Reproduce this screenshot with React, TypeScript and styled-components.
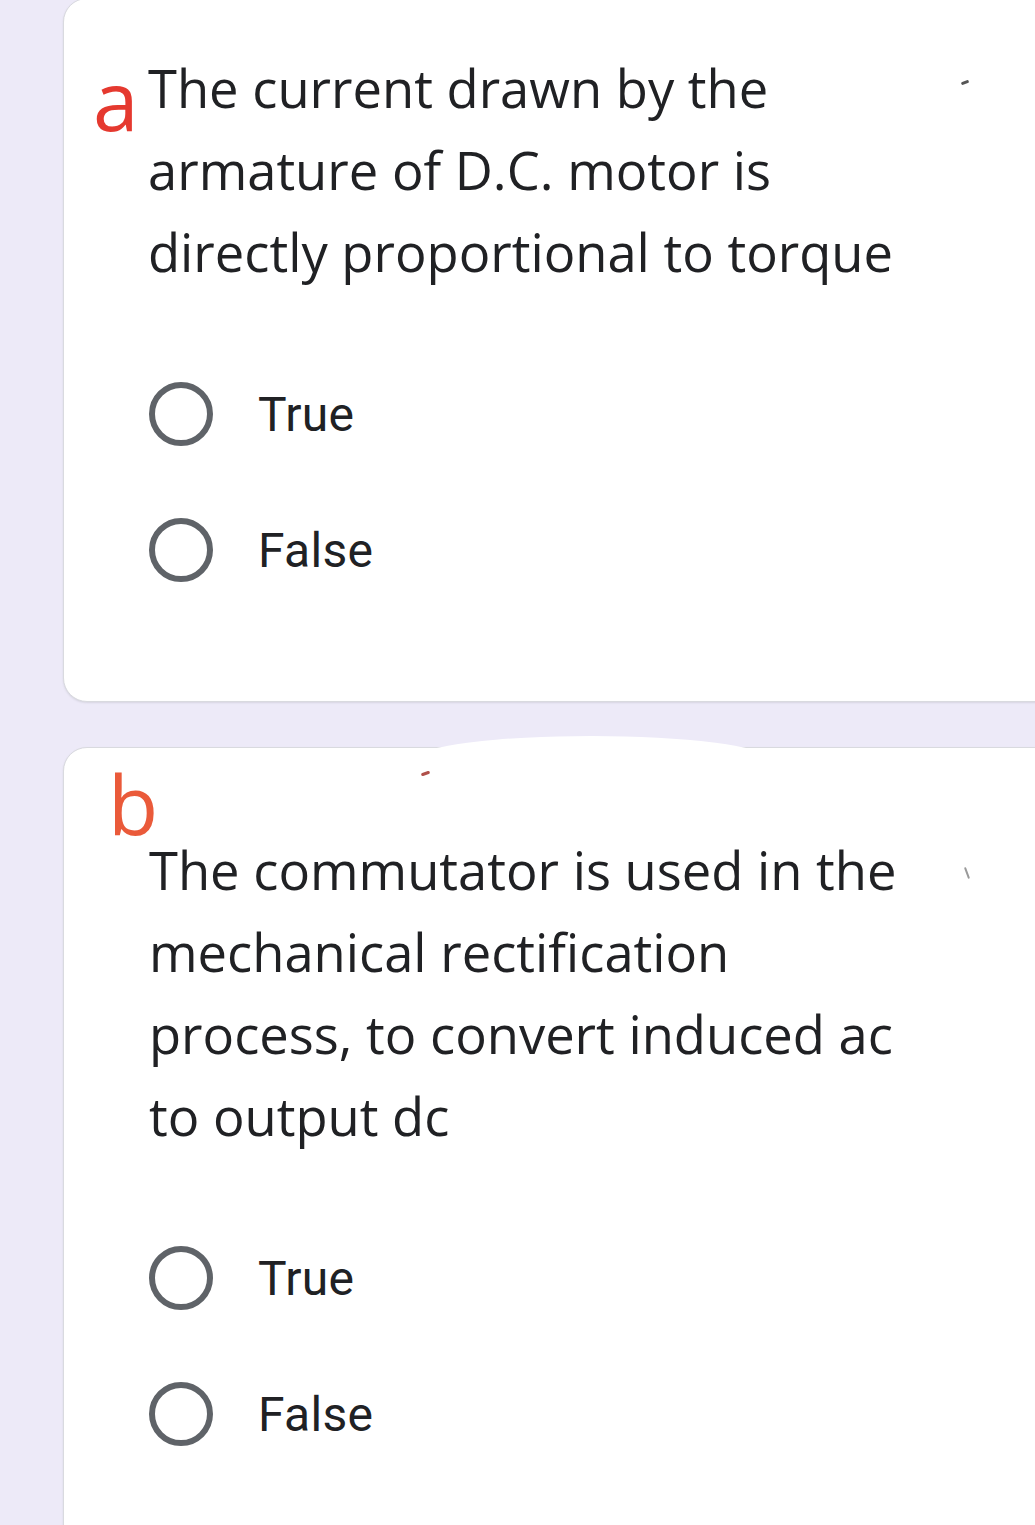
import React from "react";
import styled, { createGlobalStyle } from "styled-components";

const Global = createGlobalStyle`
  html, body { margin: 0; padding: 0; }
  body {
    background: #edeaf8;
    font-family: Roboto, "Noto Sans", Arial, sans-serif;
    overflow: hidden;
  }
`;

const Page = styled.div`
  width: 1035px;
  height: 1525px;
  overflow: hidden;
  display: flex;
  flex-direction: column;
  gap: 45px;
`;

const Card = styled.section<{ $top?: number }>`
  position: relative;
  margin-left: 63px;
  margin-right: -40px;
  margin-top: ${(p) => p.$top ?? 0}px;
  background: #ffffff;
  border: 1px solid #d9dadf;
  border-radius: 24px;
  box-shadow: 0 1px 2px rgba(60, 64, 67, 0.12);
  padding: 0 0 0 29px;
  flex-shrink: 0;
`;

const HeadRow = styled.div`
  display: flex;
  align-items: flex-start;
`;

const Letter = styled.span<{ $color: string; $size: number }>`
  font-family: "Open Sans", Roboto, sans-serif;
  color: ${(p) => p.$color};
  font-size: ${(p) => p.$size}px;
  line-height: 1;
`;

const LetterA = styled(Letter)`
  width: 55px;
  margin-top: 11px;
`;

const LetterB = styled(Letter)`
  display: block;
  margin-left: 15px;
  padding-top: 14px;
  height: 67px;
`;

const Question = styled.div<{ $indent?: number }>`
  color: #202124;
  font-family: "Open Sans", Roboto, sans-serif;
  font-size: 52.5px;
  line-height: 82px;
  margin-left: ${(p) => p.$indent ?? 0}px;
  width: 840px;
`;

const Options = styled.div`
  display: flex;
  flex-direction: column;
  margin-left: 56px;
  margin-top: 53px;
`;

const OptionRow = styled.label`
  display: flex;
  align-items: center;
  height: 136px;
  gap: 45px;
`;

const Radio = styled.span`
  width: 64px;
  height: 64px;
  box-sizing: border-box;
  border-radius: 50%;
  border: 6px solid #5f6368;
  flex-shrink: 0;
`;

const OptionText = styled.span`
  color: #202124;
  font-size: 48px;
  letter-spacing: 0.3px;
`;

const Mark = styled.span<{ $x: number; $y: number; $w: number; $h: number; $c: string; $r?: number }>`
  position: absolute;
  left: ${(p) => p.$x}px;
  top: ${(p) => p.$y}px;
  width: ${(p) => p.$w}px;
  height: ${(p) => p.$h}px;
  background: ${(p) => p.$c};
  border-radius: ${(p) => p.$r ?? 2}px;
  transform: rotate(-20deg);
`;

const Smear = styled.span`
  position: absolute;
  left: 355px;
  top: -12px;
  width: 345px;
  height: 22px;
  background: #ffffff;
  border-radius: 50% 50% 0 0 / 100% 100% 0 0;
`;

const Choices = () => (
  <Options>
    <OptionRow>
      <Radio />
      <OptionText>True</OptionText>
    </OptionRow>
    <OptionRow>
      <Radio />
      <OptionText>False</OptionText>
    </OptionRow>
  </Options>
);

export default function App() {
  return (
    <>
      <Global />
      <Page>
        <Card $top={-2} style={{ paddingTop: 48, paddingBottom: 83 }}>
          <HeadRow>
            <LetterA $color="#e5392f" $size={82}>a</LetterA>
            <Question>
              The current drawn by the
              <br />
              armature of D.C. motor is
              <br />
              directly proportional to torque
            </Question>
          </HeadRow>
          <Choices />
          <Mark $x={897} $y={82} $w={8} $h={3} $c="#555555" />
        </Card>
        <Card style={{ paddingBottom: 200 }}>
          <Smear />
          <LetterB $color="#ea5a3a" $size={82}>b</LetterB>
          <Question $indent={56}>
            The commutator is used in the
            <br />
            mechanical rectification
            <br />
            process, to convert induced ac
            <br />
            to output dc
          </Question>
          <Choices />
          <Mark $x={357} $y={24} $w={9} $h={3} $c="#b0504a" />
          <Mark $x={902} $y={119} $w={2} $h={12} $c="#9a9a9a" $r={1} />
        </Card>
      </Page>
    </>
  );
}
